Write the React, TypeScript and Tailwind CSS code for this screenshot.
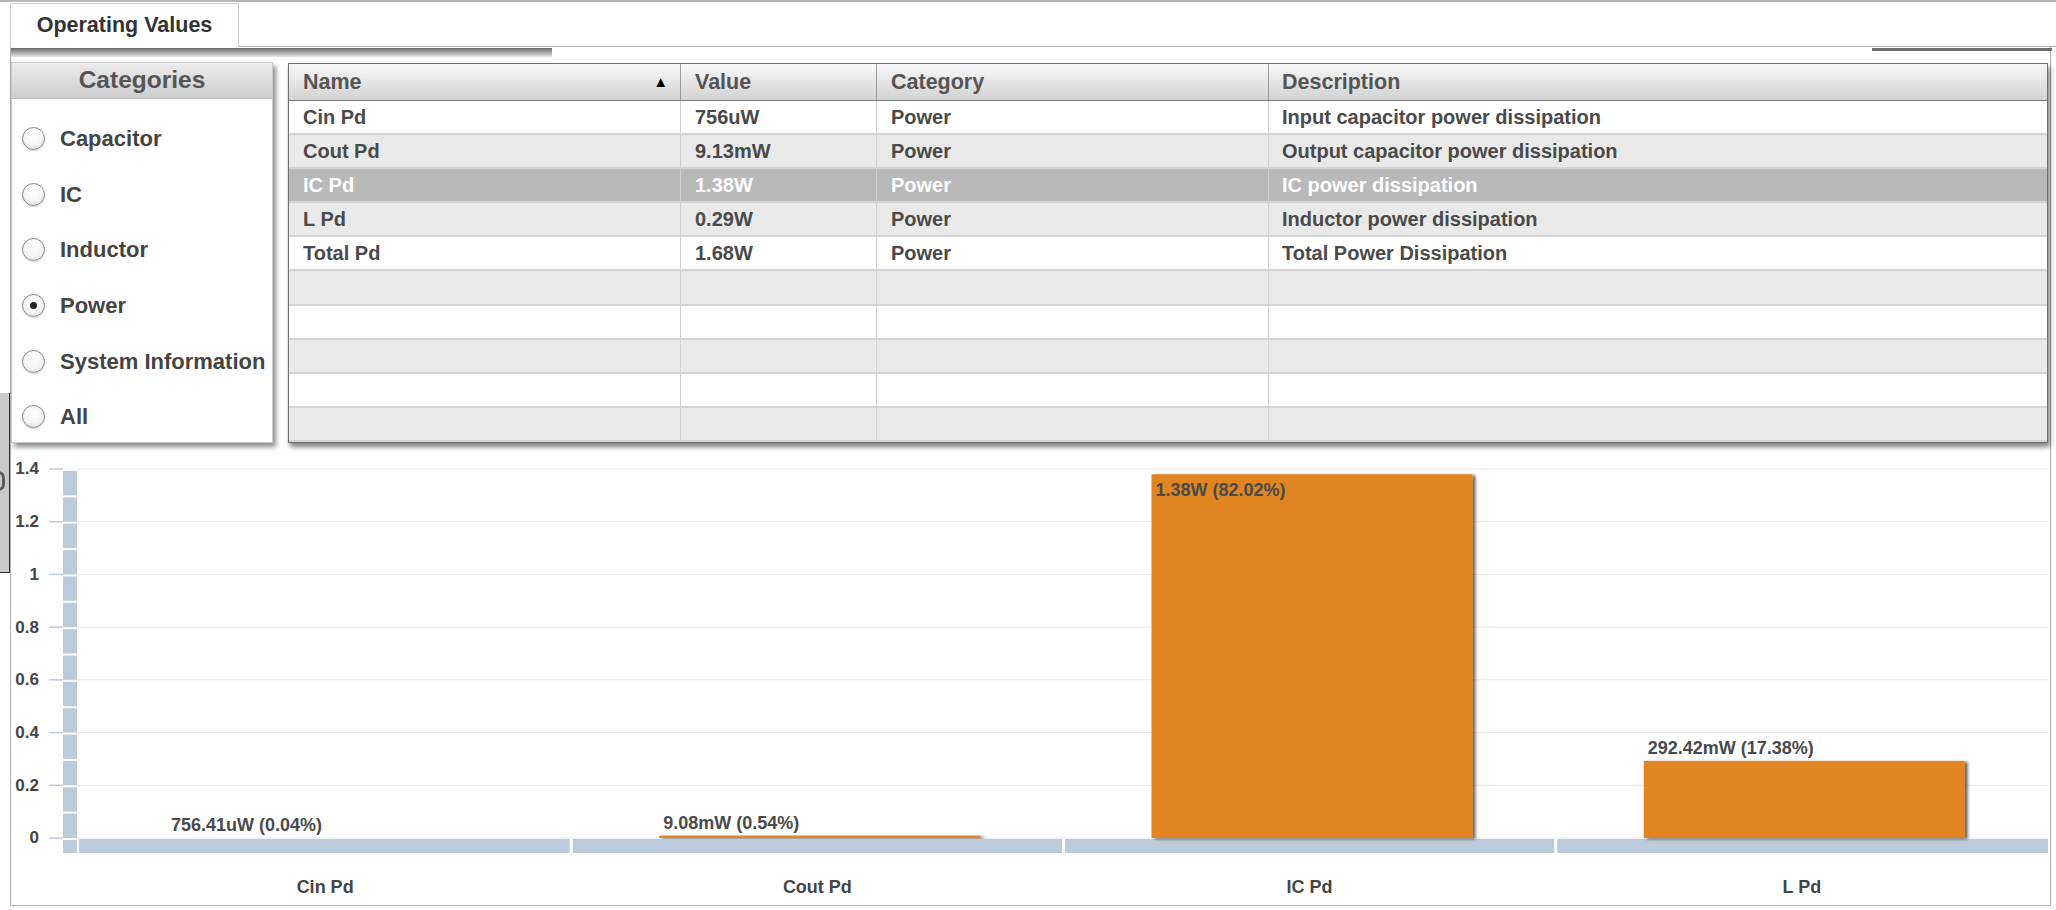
import React from "react";

const CATEGORIES = ["Capacitor", "IC", "Inductor", "Power", "System Information", "All"];

const ROWS = [
  { name: "Cin Pd", value: "756uW", category: "Power", desc: "Input capacitor power dissipation" },
  { name: "Cout Pd", value: "9.13mW", category: "Power", desc: "Output capacitor power dissipation" },
  { name: "IC Pd", value: "1.38W", category: "Power", desc: "IC power dissipation", selected: true },
  { name: "L Pd", value: "0.29W", category: "Power", desc: "Inductor power dissipation" },
  { name: "Total Pd", value: "1.68W", category: "Power", desc: "Total Power Dissipation" },
  { name: "", value: "", category: "", desc: "" },
  { name: "", value: "", category: "", desc: "" },
  { name: "", value: "", category: "", desc: "" },
  { name: "", value: "", category: "", desc: "" },
  { name: "", value: "", category: "", desc: "" },
];

const BARS = [
  { label: "Cin Pd", value: 0.00075641, text: "756.41uW (0.04%)" },
  { label: "Cout Pd", value: 0.00908, text: "9.08mW (0.54%)" },
  { label: "IC Pd", value: 1.38, text: "1.38W (82.02%)", inside: true },
  { label: "L Pd", value: 0.29242, text: "292.42mW (17.38%)" },
];

// chart geometry, page coordinates
const Y0 = 838;
const PX_PER_UNIT = 369 / 1.4;
const PLOT_LEFT = 79;
const PLOT_RIGHT = 2048;
const CAT_W = (PLOT_RIGHT - PLOT_LEFT) / 4;
const yOf = (v: number) => Y0 - v * PX_PER_UNIT;

function Radio({ checked }: { checked?: boolean }) {
  return (
    <div className="w-[23px] h-[23px] rounded-full border border-[#8a8a8a] bg-[radial-gradient(circle_at_50%_35%,#ffffff,#f4f4f4_55%,#d9d9d9)] shadow-[0_1px_1px_rgba(0,0,0,0.15)] flex items-center justify-center shrink-0">
      {checked && <div className="w-[7px] h-[7px] rounded-full bg-[#222]" />}
    </div>
  );
}

function Chart() {
  const major = [1.4, 1.2, 1, 0.8, 0.6, 0.4, 0.2, 0];
  const minor = Array.from({ length: 14 }, (_, i) => 0.1 * (i + 1));
  const text = { fontFamily: "'Liberation Sans', Arial, sans-serif", fontWeight: 700 } as const;
  return (
    <svg width={2039} height={462} viewBox="11 443 2039 462" className="block">
      <defs>
        <filter id="barShadow" x="-5%" y="-5%" width="115%" height="115%">
          <feDropShadow dx="3" dy="1" stdDeviation="1.5" floodColor="#000" floodOpacity="0.6" />
        </filter>
      </defs>

      {major.map((v) => (
        <g key={v}>
          <line x1={77} x2={PLOT_RIGHT} y1={yOf(v)} y2={yOf(v)} stroke="#e8e8e8" strokeWidth={1} />
          <line x1={49} x2={63} y1={yOf(v)} y2={yOf(v)} stroke="#bccbdb" strokeWidth={1.5} />
          <text x={39} y={yOf(v) + 1} textAnchor="end" dominantBaseline="middle" fontSize={17} fill="#444" style={text}>
            {v}
          </text>
        </g>
      ))}

      {/* y axis band */}
      <rect x={63} y={469} width={14} height={384} fill="#bccbdb" />
      {minor.map((v) => (
        <line key={v} x1={63} x2={77} y1={yOf(v) + 1} y2={yOf(v) + 1} stroke="#fff" strokeWidth={2} />
      ))}
      <line x1={63} x2={77} y1={839} y2={839} stroke="#fff" strokeWidth={2} />

      {/* x axis band */}
      <rect x={PLOT_LEFT} y={839} width={PLOT_RIGHT - PLOT_LEFT} height={14} fill="#bccbdb" />
      {[1, 2, 3].map((i) => (
        <line key={i} x1={PLOT_LEFT + i * CAT_W} x2={PLOT_LEFT + i * CAT_W} y1={839} y2={853} stroke="#fff" strokeWidth={3} />
      ))}

      {BARS.map((b, i) => {
        const x = PLOT_LEFT + i * CAT_W + 88;
        const h = b.value * PX_PER_UNIT;
        const top = Y0 - h;
        return (
          <g key={b.label}>
            {h > 0.5 && <rect x={x} y={top} width={321} height={h} fill="#e08522" filter="url(#barShadow)" />}
            <text x={x + 4} y={b.inside ? top + 22 : top - 7} fontSize={18} fill="#4a4a4a" style={text}>
              {b.text}
            </text>
            <text
              x={PLOT_LEFT + i * CAT_W + CAT_W / 2}
              y={888}
              textAnchor="middle"
              dominantBaseline="middle"
              fontSize={18}
              fill="#444"
              style={text}
            >
              {b.label}
            </text>
          </g>
        );
      })}
    </svg>
  );
}

export default function App() {
  return (
    <div className="w-[2056px] h-[910px] bg-white overflow-hidden font-['Liberation_Sans',Arial,sans-serif]">
      {/* tab strip */}
      <div className="h-[47px] border-t-2 border-[#b5b5b5] flex">
        <div className="w-[10px]" />
        <div className="mt-[1px] w-[229px] h-[44px] border border-b-0 border-[#cfcfcf] bg-white flex items-center justify-center text-[21.5px] font-bold text-[#333]">
          Operating Values
        </div>
        <div className="flex-1 border-b border-[#a8b0b0]" />
      </div>

      <div className="flex">
        {/* partly hidden side handle */}
        <div className="w-[10px]">
          <div className="mt-[346px] h-[180px] bg-[#c9c9c9] border-r border-b border-[#333] overflow-hidden">
            <div className="mt-[78px] ml-[-8px] w-[13px] h-[20px] border-[3px] border-[#5a5a5a] rounded-full" />
          </div>
        </div>

        <div className="w-[2041px] h-[859px] border-x border-b border-[#a9b0b0] flex flex-col">
          {/* shadows of collapsed toolbars */}
          <div className="h-[15px] flex">
            <div className="mt-[1px] w-[541px] h-[9px] bg-[linear-gradient(to_bottom,#6b6b6b,#9a9a9a_40%,#e6e6e6)]" />
            <div className="flex-1" />
            <div className="mt-[1px] mr-[-2px] w-[180px] h-[3px] bg-[#6e6e6e]" />
          </div>

          <div className="h-[381px] flex">
            {/* categories */}
            <div className="w-[262px] h-[381px] border border-[#c9c9c9] bg-white shadow-[3px_4px_5px_rgba(0,0,0,0.45)] flex flex-col">
              <div className="h-[36px] bg-[linear-gradient(to_bottom,#ececec,#cdcdcd)] border-b border-[#bdbdbd] flex items-center justify-center text-[24.5px] font-bold text-[#555]">
                Categories
              </div>
              <div className="pt-[12px]">
                {CATEGORIES.map((c) => (
                  <div key={c} className="h-[55.6px] flex items-center pl-[10px] gap-[15px]">
                    <Radio checked={c === "Power"} />
                    <span className="text-[22px] font-bold text-[#444] whitespace-nowrap">{c}</span>
                  </div>
                ))}
              </div>
            </div>

            {/* values table */}
            <div className="ml-[15px] mt-[1px] w-[1760px] h-[380px] border border-[#6e6e6e] bg-white shadow-[2px_4px_5px_rgba(0,0,0,0.5)] flex flex-col">
              <div className="h-[37px] shrink-0 grid grid-cols-[392px_196px_392px_1fr] bg-[linear-gradient(to_bottom,#f8f8f8,#d2d2d2)] border-b border-[#7a7a7a] text-[21.5px] font-bold text-[#555]">
                <div className="border-r border-[#9a9a9a] pl-[14px] pr-[12px] flex items-center justify-between">
                  <span>Name</span>
                  <span className="text-[15px] text-black">▲</span>
                </div>
                <div className="border-r border-[#9a9a9a] pl-[14px] flex items-center">Value</div>
                <div className="border-r border-[#9a9a9a] pl-[14px] flex items-center">Category</div>
                <div className="pl-[13px] flex items-center">Description</div>
              </div>
              {ROWS.map((r, i) => (
                <div
                  key={i}
                  className={`h-[34.1px] shrink-0 grid grid-cols-[392px_196px_392px_1fr] border-b-2 border-[#d3d3d3] text-[20px] font-bold ${
                    r.selected ? "bg-[#b9b9b9] text-white" : i % 2 === 0 ? "bg-white text-[#4a4a4a]" : "bg-[#e9e9e9] text-[#4a4a4a]"
                  }`}
                >
                  <div className="border-r border-[#d0d0d0] pl-[14px] flex items-center">{r.name}</div>
                  <div className="border-r border-[#d0d0d0] pl-[14px] flex items-center">{r.value}</div>
                  <div className="border-r border-[#d0d0d0] pl-[14px] flex items-center">{r.category}</div>
                  <div className="pl-[13px] flex items-center">{r.desc}</div>
                </div>
              ))}
            </div>
          </div>

          <Chart />
        </div>
      </div>
    </div>
  );
}
